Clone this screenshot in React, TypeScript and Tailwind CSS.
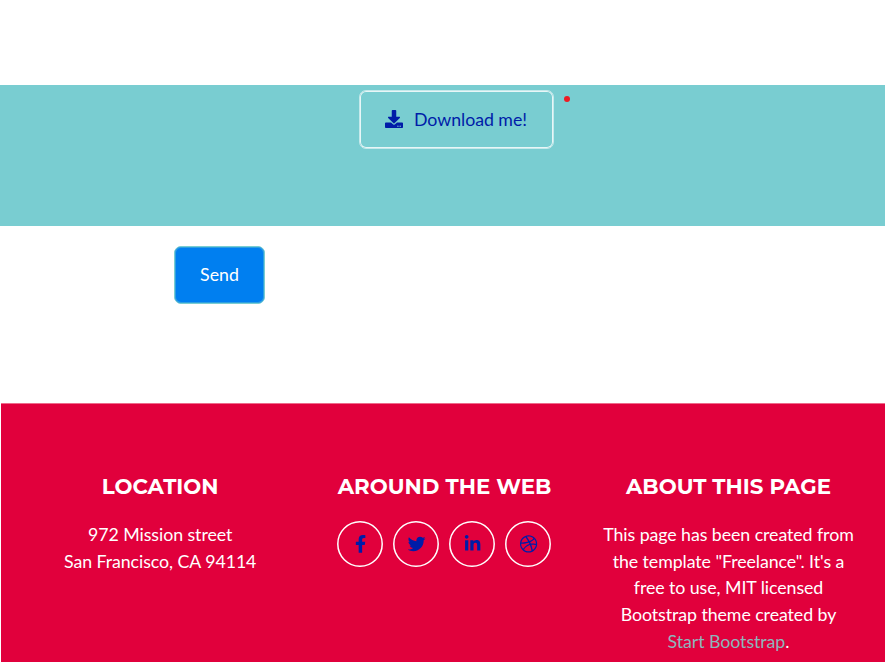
import type { ReactNode } from 'react';
import { FaDownload, FaFacebookF, FaTwitter, FaLinkedinIn, FaDribbble } from 'react-icons/fa';

function Heading({ children }: { children: ReactNode }) {
  return (
    <h4 className="mb-[20px] whitespace-nowrap pt-px font-['Montserrat','Inter',sans-serif] text-[21.33px] font-bold leading-[25px] tracking-normal">
      {children}
    </h4>
  );
}

const socials = [
  { name: 'Facebook', Icon: FaFacebookF },
  { name: 'Twitter', Icon: FaTwitter },
  { name: 'LinkedIn', Icon: FaLinkedinIn },
  { name: 'Dribbble', Icon: FaDribbble },
];

export default function App() {
  return (
    <div className="h-[664px] w-[885px] overflow-hidden bg-white pt-[85px] font-['Lato',sans-serif] text-[17.78px] leading-[26.67px]">
      <section className="flex h-[141px] items-start bg-[#79cdd1] pl-[359px] pt-[5px]">
        <a href="#" className="flex h-[59px] w-[195px] items-center rounded-[7px] border border-[#c4e9eb] pl-[25px] text-[#001ca8] shadow-[inset_0_0_0_1px_#e8f6f7]">
          <FaDownload className="mr-[11px] size-[18px] -translate-y-px" />
          <span className="tracking-[-0.05px]">Download me!</span>
        </a>
        <span className="ml-[10px] mt-[6px] size-[5.5px] rounded-full bg-[#ed1c24]" />
      </section>
      <section className="h-[177px] pl-[174px] pt-[20px]">
        <button className="h-[58px] w-[91px] rounded-[7px] border border-[#79cdd1] bg-[#007ff0] pb-[2px] text-white shadow-[inset_0_0_0_1px_#2f9fe0]">Send</button>
      </section>
      <footer className="ml-px flex h-[259px] border-t border-[#ee6a8a] bg-[#e1003c] pl-[17px] pt-[69px] text-center tracking-[-0.07px] text-white">
        <div className="w-[284.4px] px-[13.3px]">
          <Heading>LOCATION</Heading>
          <p className="pt-[2px]">972 Mission street<br />San Francisco, CA 94114</p>
        </div>
        <div className="flex w-[284.4px] flex-col items-center">
          <Heading>AROUND THE WEB</Heading>
          <div className="mr-px flex gap-[10px] pt-[2px]">
            {socials.map(({ name, Icon }) => (
              <a key={name} href="#" aria-label={name} className="grid size-[46px] place-items-center text-[#001ca8]">
                <svg viewBox="0 0 46 46" className="col-start-1 row-start-1 size-[46px]" fill="none" stroke="#fff">
                  <circle cx="23" cy="23" r="22.2" strokeWidth="1.5" />
                </svg>
                <Icon className="col-start-1 row-start-1 size-[17.8px] translate-x-[0.7px]" />
              </a>
            ))}
          </div>
        </div>
        <div className="w-[284.4px] px-[16px]">
          <Heading><span className="-ml-px">ABOUT THIS PAGE</span></Heading>
          <p className="-ml-px pt-[2px]">
            This page has been created from the template "Freelance". It's a free to use, MIT licensed Bootstrap theme created by <a href="#" className="whitespace-nowrap text-[#8eb5bb]">Start Bootstrap</a>.
          </p>
        </div>
      </footer>
    </div>
  );
}
